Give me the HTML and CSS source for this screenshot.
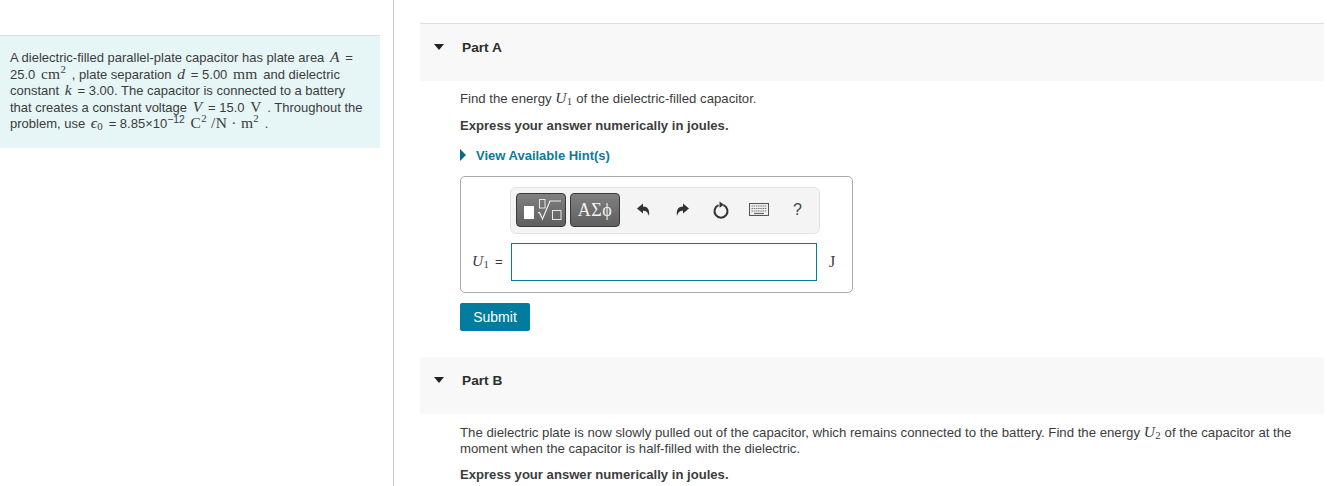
FILE: index.html
```html
<!DOCTYPE html>
<html lang="en">
<head>
<meta charset="utf-8">
<title>Dielectric-filled capacitor</title>
<link rel="stylesheet" href="styles.css">
</head>
<body>
<div class="page">
  <aside class="side">
    <div class="intro">A dielectric-filled parallel-plate capacitor has plate area <i class="m">A</i> =<br>25.0 <span class="m">cm<sup>2</sup></span> , plate separation <i class="m">d</i> = 5.00 <span class="m">mm</span> and dielectric<br>constant <i class="m">k</i> = 3.00. The capacitor is connected to a battery<br>that creates a constant voltage <i class="m">V</i> = 15.0 <span class="m">V</span> . Throughout the<br>problem, use <i class="m">ϵ<sub>0</sub></i> = 8.85×10<sup class="pow">−12</sup> <span class="m">C<sup>2</sup> /N · m<sup>2</sup></span> .</div>
  </aside>
  <main class="main">
    <section class="part">
      <header class="part-head first"><span class="caret"></span><h2 class="part-title">Part A</h2></header>
      <div class="part-body">
        <p class="q">Find the energy <i class="m">U<sub>1</sub></i> of the dielectric-filled capacitor.</p>
        <p class="instr">Express your answer numerically in joules.</p>
        <a class="hint"><span class="hint-caret"></span>View Available Hint(s)</a>
        <div class="answer">
          <div class="toolbar">
            <span class="tool-btn wide">
              <svg width="48" height="32" viewBox="0 0 48 32"><rect x="7" y="12" width="10" height="13" fill="#fff"/><rect x="22.500" y="5.500" width="5.500" height="8.500" fill="none" stroke="#e8e8e8"/><path d="M21 19l1.500-.5 3 6.500 7.500-18h11" fill="none" stroke="#f0f0f0" stroke-width="1.200"/><rect x="35.500" y="16.500" width="8.500" height="9" fill="none" stroke="#e8e8e8"/></svg>
            </span>
            <span class="tool-btn greek">ΑΣϕ</span>
            <span class="tool-icons">
              <svg class="ti" width="16" height="16" viewBox="0 0 16 16"><path d="M1 6.500L7 1.500V4.500C11.500 4.500 14 7.500 13 14 11.800 10.500 10.500 8.800 7 8.800V11.500z" fill="#333"/></svg>
              <svg class="ti" width="16" height="16" viewBox="0 0 16 16"><path d="M15 6.500L9 1.500V4.500C4.500 4.500 2 7.500 3 14 4.200 10.500 5.500 8.800 9 8.800V11.500z" fill="#333"/></svg>
              <svg class="ti refresh" width="18" height="18" viewBox="0 0 18 18"><path d="M6.500 4.200A6.500 6.500 0 1 0 11.500 4.200" fill="none" stroke="#333" stroke-width="2"/><path d="M7.500 0.500L12 3.800 7.500 6.800z" fill="#333"/></svg>
              <svg class="ti" width="20" height="13" viewBox="0 0 20 13"><rect x="0.500" y="0.500" width="19" height="12" fill="#efefef" stroke="#555"/><path d="M2.500 3h15M2.500 5.500h15M2.500 8h15" stroke="#777" stroke-width="1.200" stroke-dasharray="1.500 .7"/><path d="M5 10.500h10" stroke="#666" stroke-width="1.200"/></svg>
              <span class="help">?</span>
            </span>
          </div>
          <div class="input-row">
            <label class="lbl"><i class="m">U<sub>1</sub></i> =</label>
            <span class="field"></span>
            <span class="unit">J</span>
          </div>
        </div>
        <button class="submit">Submit</button>
      </div>
    </section>
    <section class="part">
      <header class="part-head"><span class="caret"></span><h2 class="part-title">Part B</h2></header>
      <div class="part-body second">
        <p class="q2">The dielectric plate is now slowly pulled out of the capacitor, which remains connected to the battery. Find the energy <i class="m">U<sub>2</sub></i> of the capacitor at the<br>moment when the capacitor is half-filled with the dielectric.</p>
        <p class="instr">Express your answer numerically in joules.</p>
      </div>
    </section>
  </main>
</div>
</body>
</html>
```
FILE: styles.css
```css
* { box-sizing: border-box; }
html, body { margin: 0; height: 486px; overflow: hidden; background: #fff; }
body { font: 13.2px/16px "Liberation Sans", Arial, sans-serif; color: #3c3c3c; }
.page { display: flex; height: 486px; }
.side { width: 394px; flex: none; border-right: 1px solid #c8c8c8; padding-top: 35px; }
.intro { width: 380px; height: 113px; padding: 14px 10px 0; background: #e6f5f6; border-top: 1px solid #d5e2e6; font-size: 13px; line-height: 16.600px; white-space: nowrap; }
.m { font-family: "Liberation Serif", "Times New Roman", serif; font-size: 15.500px; line-height: 0; letter-spacing: .3px; }
.intro .m { margin: 0 2px; }
sup, sub { font-size: 70%; line-height: 0; }
.pow { font-size: 80%; }
.m sup, .m sub { font-family: "Liberation Serif", serif; font-style: normal; }
.m sub { vertical-align: -2px; }
.main { flex: none; width: 904px; margin-left: 26px; padding-top: 23px; }
.part-head { height: 57px; background: #f8f8f8; display: flex; align-items: flex-start; padding: 15px 0 0 14px; }
.part-head.first { height: 58px; border-top: 1px solid #ddd; }
.caret { width: 0; height: 0; margin-top: 5px; border-left: 5.500px solid transparent; border-right: 5.500px solid transparent; border-top: 6px solid #222; }
.part-title { margin: 1px 0 0 18px; font-size: 13.700px; line-height: 16px; font-weight: 700; color: #2d2d2d; }
.part-body { padding: 10px 0 26px 40px; }
.part-body.second { padding-top: 11px; padding-bottom: 0; }
.q { margin: 0 0 11px; }
.q2 { margin: 0 0 10px; white-space: nowrap; }
.instr { margin: 0 0 14px; font-size: 13.1px; font-weight: 700; }
.hint { display: flex; align-items: center; height: 16px; font-size: 13px; font-weight: 700; color: #0a7a9d; }
.hint-caret { width: 0; height: 0; margin-right: 10px; margin-top: -2px; border-top: 6px solid transparent; border-bottom: 6px solid transparent; border-left: 6px solid #0a6a87; }
.answer { width: 393px; height: 117px; margin-top: 12px; border: 1px solid #a9a9a9; border-radius: 5px; padding-top: 10px; }
.toolbar { width: 310px; height: 47px; margin-left: 49px; display: flex; align-items: center; padding: 0 0 2px 5px; background: #f4f4f4; border: 1px solid #e2e2e2; border-radius: 6px; }
.tool-btn { display: flex; align-items: center; justify-content: center; width: 50px; height: 34px; border: 1px solid #3a3a3a; border-radius: 4px; background: linear-gradient(#808080, #5f5f5f); color: #f2f2f2; }
.greek { margin-left: 4px; font: 18px/1 "Liberation Serif", serif; letter-spacing: .5px; }
.tool-icons { display: flex; align-items: center; margin-left: 16px; }
.ti { flex: none; margin-right: 22px; }
.refresh { margin-right: 19px; }
.help { font-size: 16px; color: #444; margin-left: 2px; }
.input-row { display: flex; align-items: center; margin-top: 9px; }
.lbl { width: 50px; padding-left: 11px; white-space: nowrap; word-spacing: 2px; }
.field { width: 306px; height: 38px; border: 1px solid #007c9e; background: #fff; }
.unit { margin-left: 12px; font: 16px/1 "Liberation Serif", serif; }
.submit { display: block; width: 70px; height: 28px; margin-top: 10px; padding: 0; border: 0; border-radius: 2px; background: #007c9e; color: #fff; font: 14px "Liberation Sans", sans-serif; }
```
